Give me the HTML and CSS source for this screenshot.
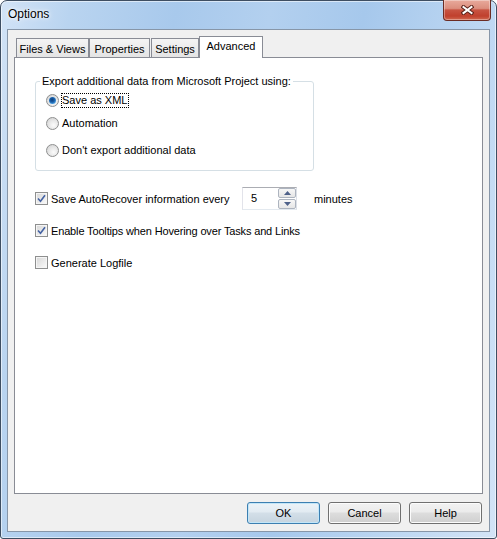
FILE: index.html
```html
<!DOCTYPE html>
<html>
<head>
<meta charset="utf-8">
<title>Options</title>
<link rel="stylesheet" href="styles.css">
</head>
<body>
<div class="window">
  <div class="titlebar">
    <span class="title">Options</span>
    <div class="close">
      <svg width="13" height="10" viewBox="0 0 13 10">
        <path d="M2.5 2 L10.5 8 M10.5 2 L2.5 8" stroke="#5a2219" stroke-width="4" stroke-linecap="square" fill="none"/>
        <path d="M2.5 2 L10.5 8 M10.5 2 L2.5 8" stroke="#ffffff" stroke-width="2" stroke-linecap="square" fill="none"/>
      </svg>
    </div>
  </div>
  <div class="client">
    <div class="tabs">
      <div class="tab t-files">Files &amp; Views</div>
      <div class="tab t-props">Properties</div>
      <div class="tab t-settings">Settings</div>
      <div class="tab t-adv active">Advanced</div>
    </div>
    <div class="panel">
      <div class="group">
        <span class="legend">Export additional data from Microsoft Project using:</span>
        <div class="opt"><span class="radio checked"></span><span class="lbl focus">Save as XML</span></div>
        <div class="opt gap6"><span class="radio"></span><span class="lbl">Automation</span></div>
        <div class="opt gap10"><span class="radio"></span><span class="lbl">Don't export additional data</span></div>
      </div>
      <div class="checks">
        <div class="chk-row">
          <span class="checkbox"><svg width="9" height="9" viewBox="0 0 9 9"><path d="M1 4.5 L3.5 7.2 L8 1.2" stroke="#4462a3" stroke-width="1.6" fill="none"/></svg></span>
          <span class="clbl autosave">Save AutoRecover information every</span>
          <div class="spin">
            <span class="spin-val">5</span>
            <div class="spin-btns">
              <div class="sb"><svg width="7" height="4" viewBox="0 0 7 4"><path d="M0 4 L3.5 0 L7 4 Z" fill="#4e6189"/></svg></div>
              <div class="sb"><svg width="7" height="4" viewBox="0 0 7 4"><path d="M0 0 L3.5 4 L7 0 Z" fill="#4e6189"/></svg></div>
            </div>
          </div>
          <span class="unit">minutes</span>
        </div>
        <div class="chk-row">
          <span class="checkbox"><svg width="9" height="9" viewBox="0 0 9 9"><path d="M1 4.5 L3.5 7.2 L8 1.2" stroke="#4462a3" stroke-width="1.6" fill="none"/></svg></span>
          <span class="clbl tight">Enable Tooltips when Hovering over Tasks and Links</span>
        </div>
        <div class="chk-row">
          <span class="checkbox"></span>
          <span class="clbl">Generate Logfile</span>
        </div>
      </div>
    </div>
    <div class="buttons">
      <button class="btn default">OK</button>
      <button class="btn">Cancel</button>
      <button class="btn">Help</button>
    </div>
  </div>
</div>
</body>
</html>
```

FILE: styles.css
```css
html, body {
  margin: 0;
  padding: 0;
  background: #ffffff;
}

body {
  font-family: "Liberation Sans", Arial, sans-serif;
  font-size: 11px;
  color: #000;
}

.window {
  width: 497px;
  height: 539px;
  box-sizing: border-box;
  border: 1px solid #3e4e62;
  border-radius: 7px 7px 3px 3px;
  background: linear-gradient(100deg, #d2e3f6 0%, #b9d4f0 12%, #a8c9ec 30%, #b3d0ef 46%, #a6c8ec 62%, #c0d9f3 85%, #d3e4f7 100%);
  box-shadow: inset 0 0 0 1px rgba(255, 255, 255, 0.55);
  padding: 0 6px 6px 6px;
  display: flex;
  flex-direction: column;
}

.titlebar {
  height: 28px;
  display: flex;
  align-items: flex-start;
}

.title {
  padding: 6px 0 0 1px;
  font-size: 12px;
  line-height: 14px;
  color: #000;
  text-shadow: 0 0 6px #ffffff, 0 0 3px #ffffff;
}

.close {
  margin-left: auto;
  margin-right: -1px;
  margin-top: -1px;
  width: 48px;
  height: 21px;
  box-sizing: border-box;
  border: 1px solid #6b2c24;
  border-top: none;
  border-radius: 0 0 4px 4px;
  background: linear-gradient(#e8aa9c 0%, #dc8e7e 42%, #c85442 50%, #c0402d 80%, #d06850 100%);
  box-shadow: inset 0 0 0 1px rgba(255, 255, 255, 0.35);
  display: flex;
  align-items: center;
  justify-content: center;
}

.client {
  flex: 1;
  background: #f0f0f0;
  border: 1px solid #8796a8;
  padding: 6px 6px 7px 6px;
  display: flex;
  flex-direction: column;
}

.tabs {
  height: 21px;
  display: flex;
  align-items: flex-end;
  padding-left: 2px;
  position: relative;
  z-index: 1;
}

.tab {
  height: 19px;
  box-sizing: border-box;
  border: 1px solid #898c95;
  border-bottom: none;
  background: linear-gradient(#f4f4f4, #e4e4e4);
  display: flex;
  align-items: center;
  justify-content: center;
  padding-top: 1px;
  white-space: nowrap;
}

.t-files { width: 73px; }
.t-props { width: 61px; }
.t-settings { width: 48px; margin-left: 1px; }

.tab.active {
  width: 64px;
  height: 22px;
  margin-bottom: -1px;
  background: #ffffff;
  padding-top: 0;
  padding-bottom: 3px;
}

.panel {
  flex: 1;
  background: #ffffff;
  border: 1px solid #898c95;
  padding: 23px 20px 0 20px;
}

.group {
  position: relative;
  width: 279px;
  box-sizing: border-box;
  border: 1px solid #d5dfe5;
  border-radius: 3px;
  padding: 10px 0 11px 10px;
}

.legend {
  position: absolute;
  top: -8px;
  left: 4px;
  padding: 0 2px;
  background: #ffffff;
  line-height: 14px;
  white-space: nowrap;
}

.opt {
  display: flex;
  align-items: center;
  height: 17px;
}

.gap6 { margin-top: 6px; }
.gap10 { margin-top: 10px; }

.radio {
  position: relative;
  flex-shrink: 0;
  width: 13px;
  height: 13px;
  box-sizing: border-box;
  border-radius: 50%;
  border: 1px solid #8e8f8f;
  background: radial-gradient(circle at 60% 65%, #fbfbfb 0%, #e8e8e8 45%, #cdcdcd 100%);
}

.radio.checked::after {
  content: "";
  position: absolute;
  left: 2px;
  top: 2px;
  width: 7px;
  height: 7px;
  border-radius: 50%;
  background: radial-gradient(circle at 45% 40%, #0d3f7a 0%, #1a5ea8 40%, #4aa3e6 75%, #8ccdf5 100%);
}

.lbl {
  margin-left: 3px;
  line-height: 13px;
  white-space: nowrap;
}

.lbl.focus {
  margin-left: 2px;
  border: 1px dotted #000;
  padding-right: 1px;
}

.checks {
  margin-top: 16px;
  display: flex;
  flex-direction: column;
  gap: 9px;
}

.chk-row {
  height: 23px;
  display: flex;
  align-items: center;
}

.checkbox {
  flex-shrink: 0;
  width: 13px;
  height: 13px;
  box-sizing: border-box;
  border: 1px solid #8e8f8f;
  background: linear-gradient(135deg, #d6d6d6, #f0f0f0 70%, #fbfbfb);
  box-shadow: inset 0 0 0 1px #f5f5f5;
  display: flex;
  align-items: center;
  justify-content: center;
}

.clbl {
  margin-left: 3px;
  white-space: nowrap;
}

.clbl.tight {
  letter-spacing: -0.15px;
}

.autosave {
  width: 191px;
}

.spin {
  width: 55px;
  height: 23px;
  box-sizing: border-box;
  border: 1px solid;
  border-color: #abadb3 #dbdfe6 #e3e9ef #e2e3ea;
  background: #ffffff;
  display: flex;
}

.spin-val {
  flex: 1;
  padding-left: 8px;
  line-height: 20px;
}

.spin-btns {
  width: 18px;
  display: flex;
  flex-direction: column;
  gap: 1px;
}

.sb {
  flex: 1;
  box-sizing: border-box;
  border: 1px solid #adb4bf;
  border-radius: 2px;
  background: linear-gradient(#f7f7f7, #e6e6e6);
  display: flex;
  align-items: center;
  justify-content: center;
}

.unit {
  margin-left: 17px;
}

.buttons {
  margin-top: 8px;
  height: 22px;
  display: flex;
  justify-content: flex-end;
  gap: 8px;
  padding-right: 1px;
}

.btn {
  width: 73px;
  height: 22px;
  box-sizing: border-box;
  padding: 0;
  border: 1px solid #707070;
  border-radius: 3px;
  background: linear-gradient(#f2f2f2 0%, #ebebeb 45%, #dddddd 50%, #cfcfcf 100%);
  box-shadow: inset 0 0 0 1px #fcfcfc;
  font-family: "Liberation Sans", Arial, sans-serif;
  font-size: 11px;
  color: #000;
}

.btn.default {
  border-color: #3c7fb1;
  background: linear-gradient(#ecf3f8 0%, #e2ebf2 45%, #d3dfe8 50%, #c6d4df 100%);
  box-shadow: inset 0 0 0 1px #c3e6f8;
}
```
